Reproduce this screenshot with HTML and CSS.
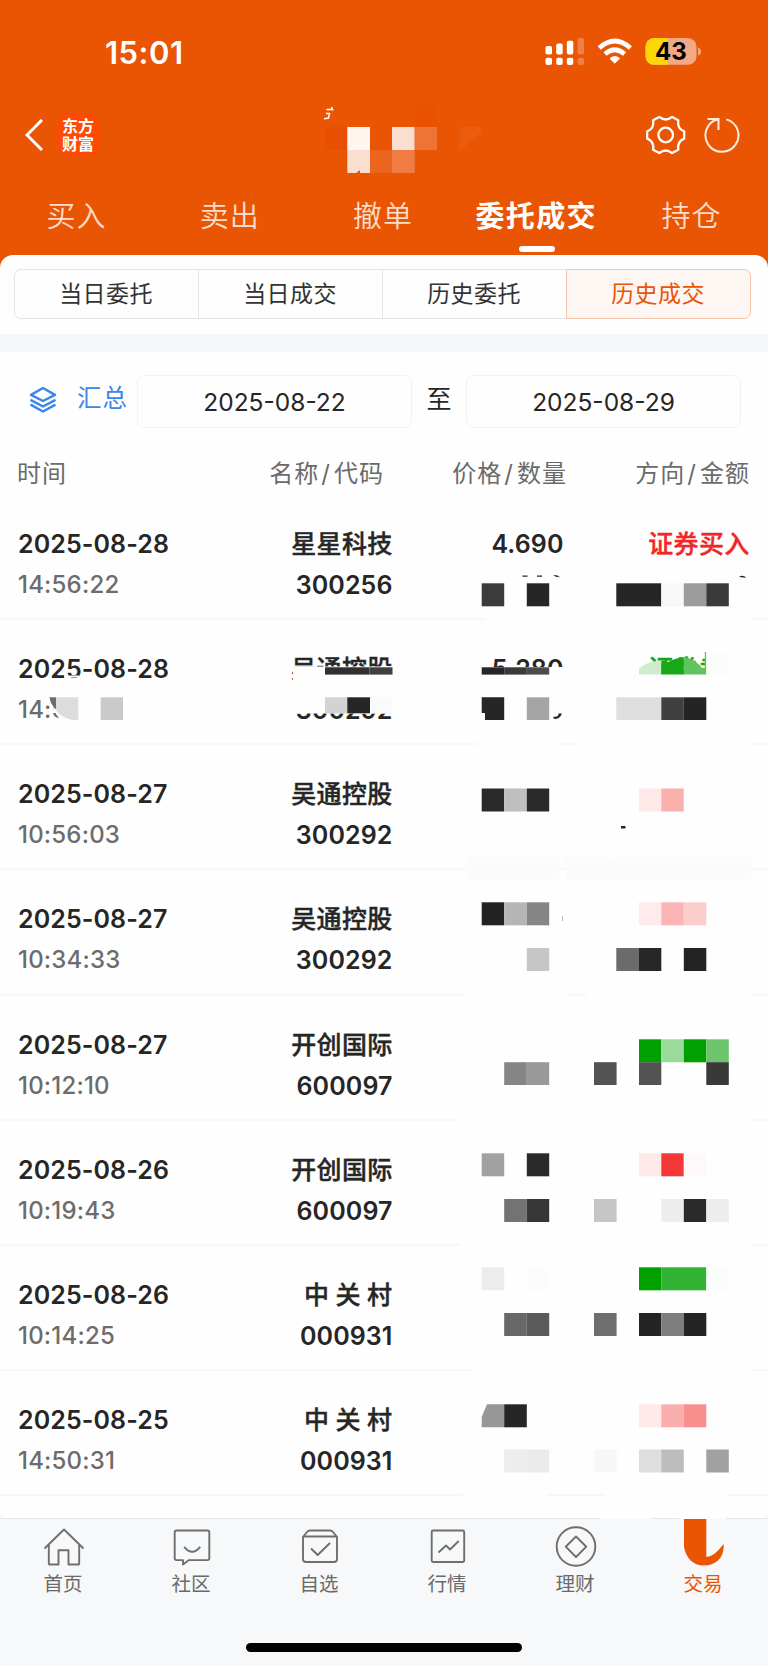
FILE: index.html
```
<!DOCTYPE html>
<html lang="zh-CN">
<head>
    <meta charset="UTF-8">
    <meta name="viewport" content="width=device-width, initial-scale=1.0">
    <title>历史成交</title>
    <link rel="stylesheet" href="styles.css">
</head>
<body>
    <div class="page">
        <header class="header">
            <div class="status-bar">
                <span class="clock">15:01</span>
                <svg class="status-icons" width="160" height="32" viewBox="0 0 160 32">
                    <g fill="#fff">
                        <rect x="1.5" y="11" width="6.5" height="8.5" rx="1.8"/>
                        <rect x="12.2" y="8.5" width="6.5" height="11" rx="1.8"/>
                        <rect x="22.8" y="5.8" width="6.5" height="13.7" rx="1.8"/>
                        <rect x="33.6" y="3" width="6.5" height="16.5" rx="1.8" opacity=".25"/>
                        <rect x="1.5" y="22.7" width="6.5" height="7.2" rx="2"/>
                        <rect x="12.2" y="22.7" width="6.5" height="7.2" rx="2"/>
                        <rect x="22.8" y="22.7" width="6.5" height="7.2" rx="2"/>
                        <rect x="33.6" y="22.7" width="6.5" height="7.2" rx="2" opacity=".25"/>
                        <path d="M70.8 28.2l-4.8-4.7q4.8-3.8 9.600 0z" stroke="#fff" stroke-linejoin="round"/>
                    </g>
                    <g fill="none" stroke="#fff" stroke-width="4.600">
                        <path d="M55.200 13Q70.800-1 86.400 13"/>
                        <path d="M61 19q9.800-8.500 19.600 0"/>
                    </g>
                    <rect x="101.5" y="3" width="51" height="26.8" rx="8.6" fill="#f4a985"/>
                    <path d="M123.5 3v26.8h-13.4a8.6 8.6 0 0 1-8.6-8.6v-9.6a8.6 8.6 0 0 1 8.6-8.6z" fill="#ffd60a"/>
                    <path d="M154 12.5q3 1 3 4t-3 4z" fill="#f4a985"/>
                    <text class="battery-text" x="126.8" y="25.2" text-anchor="middle">43</text>
                </svg>
            </div>
            <div class="nav-bar">
                <svg class="back" width="18" height="32" viewBox="0 0 18 32" fill="none" stroke="#fff" stroke-width="3">
                    <path d="M17 1L2 16l15 15"/>
                </svg>
                <div class="logo">东方<br>财富</div>
                <svg class="nav-icons" width="96" height="44" viewBox="0 0 96 44" fill="none" stroke="#fff" stroke-linejoin="round">
                    <g transform="translate(21.7 22)" stroke-width="2.3">
                        <path d="M18.500-3.600V3.600Q11.2 6.4 12.6 14.700L6.4 18.100Q0 12.9-6.4 18.100L-12.6 14.700Q-11.2 6.4-18.500 3.600V-3.600Q-11.2-6.4-12.6-14.700L-6.4-18.100Q0-12.9 6.4-18.100L12.6-14.700Q11.2-6.4 18.500-3.600z"/>
                        <circle r="7.3"/>
                    </g>
                    <path d="M82.300 6.4A16.5 16.5 0 1 1 74 6.3M63.600 5.9h10.9v11" stroke-width="2" stroke-linejoin="miter" opacity=".88"/>
                </svg>
            </div>
            <nav class="tabs">
                <span class="tab">买入</span>
                <span class="tab">卖出</span>
                <span class="tab">撤单</span>
                <span class="tab active">委托成交</span>
                <span class="tab">持仓</span>
            </nav>
        </header>

        <main class="content">
            <div class="segments">
                <span class="segment">当日委托</span>
                <span class="segment">当日成交</span>
                <span class="segment">历史委托</span>
                <span class="segment active">历史成交</span>
            </div>
            <div class="divider"></div>
            <div class="filter">
                <svg class="layers" width="28" height="28" viewBox="0 0 28 28" fill="none" stroke="#3b86e8" stroke-width="2.5" stroke-linejoin="round">
                    <path d="M14 2L26 8.8 14 15 2 8.8z"/>
                    <path d="M1.5 13.8L14 20.5l12.5-6.7M1.5 18.6L14 25.5l12.5-6.9"/>
                </svg>
                <span class="summary">汇总</span>
                <span class="date-box">2025-08-22</span>
                <span class="to">至</span>
                <span class="date-box">2025-08-29</span>
            </div>
            <div class="table-head">
                <span>时间</span>
                <span>名称<i>/</i>代码</span>
                <span>价格<i>/</i>数量</span>
                <span>方向<i>/</i>金额</span>
            </div>
            <div class="list">
                <div class="row">
                    <div><p class="date">2025-08-28</p><p class="time">14:56:22</p></div>
                    <div><p class="name">星星科技</p><p class="code">300256</p></div>
                    <div><p class="price">4.690</p></div>
                    <div><p class="side buy">证券买入</p></div>
                </div>
                <div class="row">
                    <div><p class="date">2025-08-28</p><p class="time">14:56</p></div>
                    <div><p class="name">吴通控股</p><p class="code">300292</p></div>
                    <div><p class="price">5.280</p></div>
                    <div><p class="side sell">证券卖出</p></div>
                </div>
                <div class="row">
                    <div><p class="date">2025-08-27</p><p class="time">10:56:03</p></div>
                    <div><p class="name">吴通控股</p><p class="code">300292</p></div>
                </div>
                <div class="row">
                    <div><p class="date">2025-08-27</p><p class="time">10:34:33</p></div>
                    <div><p class="name">吴通控股</p><p class="code">300292</p></div>
                </div>
                <div class="row">
                    <div><p class="date">2025-08-27</p><p class="time">10:12:10</p></div>
                    <div><p class="name">开创国际</p><p class="code">600097</p></div>
                </div>
                <div class="row">
                    <div><p class="date">2025-08-26</p><p class="time">10:19:43</p></div>
                    <div><p class="name">开创国际</p><p class="code">600097</p></div>
                </div>
                <div class="row">
                    <div><p class="date">2025-08-26</p><p class="time">10:14:25</p></div>
                    <div><p class="name spaced">中关村</p><p class="code">000931</p></div>
                </div>
                <div class="row">
                    <div><p class="date">2025-08-25</p><p class="time">14:50:31</p></div>
                    <div><p class="name spaced">中关村</p><p class="code">000931</p></div>
                </div>
            </div>
        </main>

        <footer class="tab-bar">
            <div class="tab-item">
                <svg width="44" height="44" viewBox="0 0 44 44">
                    <path d="M2.5 23.5L22 4.5l19.5 19M6.8 20v18.8q0 .7.7.7h9V25.3h10v14.2h10q.7 0 .7-.7V20"/>
                </svg>
                <span>首页</span>
            </div>
            <div class="tab-item">
                <svg width="44" height="44" viewBox="0 0 44 44">
                    <path d="M6.500 5.500h31q1.800 0 1.800 1.800v26q0 1.800-1.800 1.800H19l-6 4.400v-4.400H6.500q-1.800 0-1.800-1.800v-26q0-1.800 1.800-1.800z"/>
                    <path d="M14.200 21.800q8 9.800 16 0"/>
                </svg>
                <span>社区</span>
            </div>
            <div class="tab-item">
                <svg width="44" height="44" viewBox="0 0 44 44">
                    <path d="M5 12l4-5q1-1.500 3-1.500h20q2 0 3 1.500l4 5v22q0 3-3 3H8q-3 0-3-3zM5 11.500h34M13 23.500l6.700 6.500 12.300-12"/>
                </svg>
                <span>自选</span>
            </div>
            <div class="tab-item">
                <svg width="44" height="44" viewBox="0 0 44 44">
                    <rect x="5.700" y="5.500" width="32.500" height="31.500" rx="1.500"/>
                    <path d="M12.500 27.500l7.500-7 4 4 8.700-8.500"/>
                </svg>
                <span>行情</span>
            </div>
            <div class="tab-item">
                <svg width="44" height="44" viewBox="0 0 44 44">
                    <circle cx="22" cy="21.500" r="19.300"/>
                    <path d="M22 11.500l10.300 10.200L22 32 11.700 21.700z"/>
                </svg>
                <span>理财</span>
            </div>
            <div class="tab-item active">
                <svg width="44" height="44" viewBox="0 0 44 44">
                    <path d="M2 -7h22.300V32Q32 32 41.500 19C43 32 34 40.500 22 40.500 11 40.500 4 33 2 22z"/>
                </svg>
                <span>交易</span>
            </div>
            <div class="home-indicator"></div>
        </footer>

        <!-- privacy mosaic over account name, prices and amounts -->
        <svg class="mosaic" width="768" height="1666" viewBox="0 0 768 1666">
            <!-- account name -->
            <path d="M326.500 109.500h6M331.500 107l1.500 3.500M326 113.500h3.500l-1 4.500-4.500.800" fill="none" stroke="#fff" stroke-width="1.500"/>
            <g>
                <rect x="325" y="127" width="22.500" height="23" fill="#e84f02"/>
                <rect x="347.300" y="127" width="22.700" height="23" fill="#fff5ef"/>
                <rect x="347.300" y="150" width="22.700" height="23" fill="#fadfd0"/>
                <rect x="370" y="150" width="22" height="23" fill="#ec651f"/>
                <rect x="392" y="127" width="22.700" height="23" fill="#fadfd0"/>
                <rect x="392" y="150" width="22.700" height="23" fill="#ef7d43"/>
                <rect x="414.700" y="105" width="22.300" height="22" fill="#e85202"/>
                <rect x="414.700" y="127" width="22.300" height="23" fill="#ed7434"/>
                <path d="M459.500 127h22v5l-22 19z" fill="#eb5b10"/>
                <path d="M356 173l4-3v3z" fill="#e95504"/>
            </g>

            <!-- blanked areas -->
            <g fill="#fefefe">
                <path d="M485 617h266v5H485zM477 742h81v5h-81zM579 742h172v5H579zM465 992h102v6H465zM587 992h164v6H587zM460 1117h291v7H460zM460 1242h291v7H460zM472 1367h279v7H472zM463 1493h83v6h-83zM606 1493h122v6H606z"/>
                <path d="M600 1515h51v4h-51zM679 1515h47v4h-47z"/>
                <path d="M64 675.500h15v2H64zM293 666.500h101v26H293zM293 684h101v29.500H293zM480 667h94v20h-94zM630 674h76v14h-76zM706 650h46v38h-46z"/>
                <path d="M50 697h76v25H64q-7-4-9-11z"/>
            </g>
            <g fill="#fbfbfb">
                <path d="M467 857h92.500v23H467zM563 857h47l2 4 3-4h136v23H567z"/>
            </g>

            <!-- row 1 -->
            <rect x="481.700" y="583.300" width="22.500" height="23" fill="#3b3b3b"/>
            <rect x="526.800" y="583.300" width="22.400" height="23" fill="#262626"/>
            <rect x="616.300" y="583.300" width="45" height="23" fill="#262626"/>
            <rect x="661.300" y="583.300" width="22.500" height="23" fill="#f8f8f8"/>
            <rect x="683.800" y="583.300" width="22.500" height="23" fill="#9c9c9c"/>
            <rect x="706.300" y="583.300" width="22.500" height="23" fill="#3a3a3a"/>
            <path d="M522.500 575.500h5v1.200h-5zM537 575.500h5v1.200h-5zM553 575.200h4l3 2-4-.4zM739 577q3.500-2.700 7.500.8z" fill="#262626"/>

            <!-- row 2 -->
            <rect x="325" y="667.300" width="44.500" height="7.300" fill="#303030"/>
            <rect x="369.500" y="667.300" width="23" height="7.300" fill="#404040"/>
            <path d="M49.500 697.300h7V710q-6-5-7-12.700z" fill="#6c6c6c"/>
            <path d="M56 697.300h22.300V720H72q-12-3-16-10z" fill="#dcdcdc"/>
            <rect x="100.700" y="697.300" width="22.300" height="22.700" fill="#c9c9c9"/>
            <rect x="325" y="697.300" width="22.300" height="16" fill="#d3d3d3"/>
            <rect x="347.300" y="697.300" width="22.700" height="16" fill="#262626"/>
            <rect x="370" y="697.300" width="22.500" height="16" fill="#fafafa"/>
            <rect x="481.700" y="667.300" width="22.500" height="7.300" fill="#262626"/>
            <rect x="504.200" y="667.300" width="22.600" height="7.300" fill="#3a3a3a"/>
            <rect x="526.800" y="667.300" width="22.400" height="7.300" fill="#4c4c4c"/>
            <path d="M639 674.600v-6q7-7 22.300-8v14z" fill="#cdedcd"/>
            <path d="M661.300 674.600v-14l7 1.500q7-4 15.500-5v17.500z" fill="#16a816"/>
            <path d="M683.800 674.600V657q12 2 19 12l2-1v-16h1.500v22.600z" fill="#60c360"/>
            <rect x="706.300" y="652" width="22.500" height="22.600" fill="#fafdfa"/>
            <path d="M481.700 697.300h22.500V720H485v-7h-3.300z" fill="#262626"/>
            <rect x="526.800" y="697.300" width="22.400" height="22.700" fill="#a5a5a5"/>
            <path d="M553.500 716.500q5 1 5-3h3.500q-3 7-8.500 5z" fill="#262626"/>
            <rect x="616.300" y="697.300" width="45" height="22.700" fill="#dedede"/>
            <rect x="661.300" y="697.300" width="22.500" height="22.700" fill="#404040"/>
            <rect x="683.800" y="697.300" width="22.500" height="22.700" fill="#242424"/>

            <!-- row 3 -->
            <rect x="481.700" y="788.500" width="22.500" height="23" fill="#2a2a2a"/>
            <rect x="504.200" y="788.500" width="22.600" height="23" fill="#bfbfbf"/>
            <rect x="526.800" y="788.500" width="22.400" height="23" fill="#2a2a2a"/>
            <rect x="639" y="788.500" width="22.300" height="23" fill="#fee8e8"/>
            <rect x="661.300" y="788.500" width="22.500" height="23" fill="#fbb0b0"/>
            <rect x="621" y="826" width="4.500" height="2.500" fill="#262626"/>

            <!-- row 4 -->
            <rect x="481.700" y="902.300" width="22.500" height="23" fill="#222"/>
            <rect x="504.200" y="902.300" width="22.600" height="23" fill="#b5b5b5"/>
            <rect x="526.800" y="902.300" width="22.400" height="23" fill="#868686"/>
            <rect x="639" y="902.300" width="22.300" height="23" fill="#ffebeb"/>
            <rect x="661.300" y="902.300" width="22.500" height="23" fill="#fab5b7"/>
            <rect x="683.800" y="902.300" width="22.500" height="23" fill="#fccdcd"/>
            <rect x="526.800" y="948" width="22.400" height="23" fill="#c6c6c6"/>
            <rect x="616.300" y="948" width="22.700" height="23" fill="#6b6b6b"/>
            <rect x="639" y="948" width="22.300" height="23" fill="#272727"/>
            <rect x="683.800" y="948" width="22.500" height="23" fill="#232323"/>
            <rect x="562" y="916" width="1" height="5" fill="#bbb"/>

            <!-- row 5 -->
            <rect x="639" y="1039.300" width="22.300" height="23" fill="#00a000"/>
            <rect x="661.300" y="1039.300" width="22.500" height="23" fill="#9ada9a"/>
            <rect x="683.800" y="1039.300" width="22.500" height="23" fill="#00a000"/>
            <rect x="706.300" y="1039.300" width="22.500" height="23" fill="#6cc56c"/>
            <rect x="504.200" y="1062.200" width="22.600" height="22.800" fill="#868686"/>
            <rect x="526.800" y="1062.200" width="22.400" height="22.800" fill="#999"/>
            <rect x="594" y="1062.200" width="22.600" height="22.800" fill="#535353"/>
            <rect x="639" y="1062.200" width="22.300" height="22.800" fill="#535353"/>
            <rect x="706.300" y="1062.200" width="22.500" height="22.800" fill="#393939"/>

            <!-- row 6 -->
            <rect x="481.700" y="1153.300" width="22.500" height="23" fill="#a1a1a1"/>
            <rect x="526.800" y="1153.300" width="22.400" height="23" fill="#2a2a2a"/>
            <rect x="639" y="1153.300" width="22.300" height="23" fill="#ffe9e9"/>
            <rect x="661.300" y="1153.300" width="22.500" height="23" fill="#f43737"/>
            <rect x="683.800" y="1153.300" width="22.500" height="23" fill="#fff8f8"/>
            <rect x="504.200" y="1199" width="22.600" height="23" fill="#737373"/>
            <rect x="526.800" y="1199" width="22.400" height="23" fill="#363636"/>
            <rect x="594" y="1199" width="22.600" height="23" fill="#c6c6c6"/>
            <rect x="661.300" y="1199" width="22.500" height="23" fill="#ededed"/>
            <rect x="683.800" y="1199" width="22.500" height="23" fill="#2a2a2a"/>
            <rect x="706.300" y="1199" width="22.500" height="23" fill="#ededed"/>

            <!-- row 7 -->
            <rect x="481.700" y="1267.300" width="22.500" height="23" fill="#ececec"/>
            <rect x="526.800" y="1267.300" width="22.400" height="23" fill="#fcfcfc"/>
            <rect x="639" y="1267.300" width="22.300" height="23" fill="#00a000"/>
            <rect x="661.300" y="1267.300" width="45" height="23" fill="#32b232"/>
            <rect x="706.300" y="1267.300" width="22.500" height="23" fill="#fafefa"/>
            <rect x="504.200" y="1313" width="22.600" height="23" fill="#686868"/>
            <rect x="526.800" y="1313" width="22.400" height="23" fill="#5b5b5b"/>
            <rect x="594" y="1313" width="22.600" height="23" fill="#6e6e6e"/>
            <rect x="639" y="1313" width="22.300" height="23" fill="#242424"/>
            <rect x="661.300" y="1313" width="22.500" height="23" fill="#7e7e7e"/>
            <rect x="683.800" y="1313" width="22.500" height="23" fill="#242424"/>

            <!-- row 8 -->
            <path d="M487 1404.300h17.200v23h-22.500V1417z" fill="#979797"/>
            <rect x="504.200" y="1404.300" width="22.600" height="23" fill="#262626"/>
            <rect x="639" y="1404.300" width="22.300" height="23" fill="#ffe9e9"/>
            <rect x="661.300" y="1404.300" width="22.500" height="23" fill="#faaeae"/>
            <rect x="683.800" y="1404.300" width="22.500" height="23" fill="#f98e8e"/>
            <rect x="504.200" y="1449.500" width="22.600" height="23" fill="#ededed"/>
            <rect x="526.800" y="1449.500" width="22.400" height="23" fill="#ebebeb"/>
            <rect x="594" y="1449.500" width="22.600" height="23" fill="#f7f7f7"/>
            <rect x="639" y="1449.500" width="22.300" height="23" fill="#dedede"/>
            <rect x="661.300" y="1449.500" width="22.500" height="23" fill="#bdbdbd"/>
            <rect x="706.300" y="1449.500" width="22.500" height="23" fill="#a1a1a1"/>
        </svg>
    </div>
</body>
</html>
```
FILE: styles.css
```
* {
    box-sizing: border-box;
}
body {
    margin: 0;
    font-family: Inter, "Noto Sans CJK SC", sans-serif;
    color: #262626;
    background-color: #f7f8fa;
}
p {
    margin: 0;
}
.page {
    position: relative;
    width: 768px;
    height: 1666px;
    overflow: hidden;
    display: flex;
    flex-direction: column;
}
.header {
    height: 268px;
    background-color: #ea5504;
    color: #fff;
}
.status-bar {
    display: flex;
    justify-content: space-between;
    align-items: center;
    height: 104px;
    padding: 0 64px 0 105px;
}
.clock {
    font-size: 31px;
    font-weight: 600;
    letter-spacing: 0.5px;
}
.status-icons {
    margin-top: -2px;
}
.battery-text {
    font-size: 24px;
    font-weight: 700;
    fill: #000;
}
.nav-bar {
    display: flex;
    align-items: center;
    height: 62px;
    padding: 0 28px 0 25px;
}
.logo {
    width: 42px;
    height: 42px;
    margin-left: 14px;
    padding-top: 3px;
    border-radius: 9px;
    background-color: #ff4a05;
    font-size: 16px;
    font-weight: 700;
    line-height: 18px;
    text-align: center;
}
.nav-icons {
    margin-left: auto;
}
.tabs {
    display: flex;
    height: 98px;
}
.tab {
    position: relative;
    flex: 1;
    padding-top: 29px;
    font-size: 29px;
    font-weight: 350;
    line-height: 44px;
    letter-spacing: 1px;
    text-align: center;
    white-space: nowrap;
    color: #fcdccb;
}
.tab.active {
    padding-right: 2px;
    font-weight: 600;
    letter-spacing: 1.4px;
    color: #fff;
}
.tab.active::after {
    content: "";
    position: absolute;
    left: 59px;
    top: 80px;
    width: 36px;
    height: 6px;
    border-radius: 3px;
    background-color: #fff;
}
.content {
    height: 1263px;
    margin-top: -13px;
    border-radius: 13px 13px 6px 6px;
    background-color: #fefefe;
    overflow: hidden;
}
.segments {
    display: flex;
    height: 50px;
    margin: 14px 17px 0 14px;
}
.segment {
    flex: 1;
    padding-right: 1px;
    border: 1px solid #e4e5ea;
    border-right: none;
    font-size: 23px;
    line-height: 49px;
    letter-spacing: 0.4px;
    text-align: center;
    color: #333;
}
.segment:first-child {
    border-radius: 7px 0 0 7px;
}
.segment.active {
    border: 1px solid #f3c3aa;
    border-radius: 0 7px 7px 0;
    background-color: #fef6f2;
    color: #ea5504;
}
.divider {
    height: 18px;
    margin-top: 15px;
    background-color: #f4f8fa;
}
.filter {
    display: flex;
    align-items: center;
    height: 53px;
    margin-top: 23px;
    padding-left: 29px;
}
.layers {
    margin-top: -4px;
}
.summary {
    width: 80px;
    margin-top: -10px;
    padding-left: 20px;
    font-size: 24.5px;
    letter-spacing: 1px;
    color: #3b86e8;
}
.date-box {
    width: 275px;
    height: 53px;
    border: 1px solid #f3f3f5;
    border-radius: 7px;
    font-size: 24.5px;
    line-height: 52px;
    text-align: center;
}
.to {
    width: 54px;
    margin-top: -10px;
    font-size: 25px;
    text-align: center;
}
.table-head {
    display: flex;
    height: 67px;
    padding-left: 17px;
    font-size: 24px;
    line-height: 91px;
    letter-spacing: 1px;
    text-align: right;
    color: #6a6a6a;
}
.table-head i {
    margin: 0 3px 0 2px;
    font-style: normal;
}
.table-head span {
    width: 183px;
}
.table-head span:first-child {
    width: 184px;
    text-align: left;
}
.row {
    display: flex;
    height: 125.15px;
    padding: 30px 0 0 18px;
    border-bottom: 2px solid #f7f7f7;
    text-align: right;
}
.row > div:first-child {
    width: 200px;
    text-align: left;
}
.row > div:nth-child(2) {
    width: 174.5px;
}
.row > div:nth-child(3) {
    width: 171px;
}
.row > div:nth-child(4) {
    width: 186px;
}
.date,
.name,
.price,
.side {
    height: 41px;
    font-size: 25px;
    font-weight: 600;
    line-height: 38px;
    letter-spacing: 0.1px;
    white-space: nowrap;
}
.name,
.side {
    font-weight: 500;
    letter-spacing: 0.3px;
    -webkit-text-stroke: 0.4px currentColor;
}
.name.spaced {
    letter-spacing: 6.5px;
    margin-right: -6px;
}
.time {
    font-size: 24px;
    font-weight: 500;
    line-height: 38px;
    letter-spacing: 0.2px;
    color: #6c6c6c;
}
.code {
    font-size: 25px;
    font-weight: 600;
    line-height: 38px;
    letter-spacing: 0.1px;
}
.buy {
    color: #f22626;
}
.sell {
    color: #16a816;
}
.tab-bar {
    display: flex;
    flex-wrap: wrap;
    align-content: flex-start;
    justify-content: center;
    height: 148px;
    border-top: 1px solid #e6e7eb;
    background-color: #f7f8fa;
}
.tab-item {
    display: flex;
    flex-direction: column;
    align-items: center;
    width: 128px;
    height: 124px;
    padding-top: 6px;
    font-size: 19.5px;
    line-height: 30px;
    color: #6a6a6a;
}
.tab-item span {
    padding-right: 2px;
}
.tab-item svg {
    overflow: visible;
    fill: none;
    stroke: #6e6e6e;
    stroke-width: 1.9;
    stroke-linejoin: round;
}
.tab-item.active {
    color: #ea5504;
}
.tab-item.active svg {
    fill: #ea5504;
    stroke: none;
}
.home-indicator {
    width: 276px;
    height: 9px;
    border-radius: 5px;
    background-color: #000;
}
.mosaic {
    position: absolute;
    left: 0;
    top: 0;
}
```
